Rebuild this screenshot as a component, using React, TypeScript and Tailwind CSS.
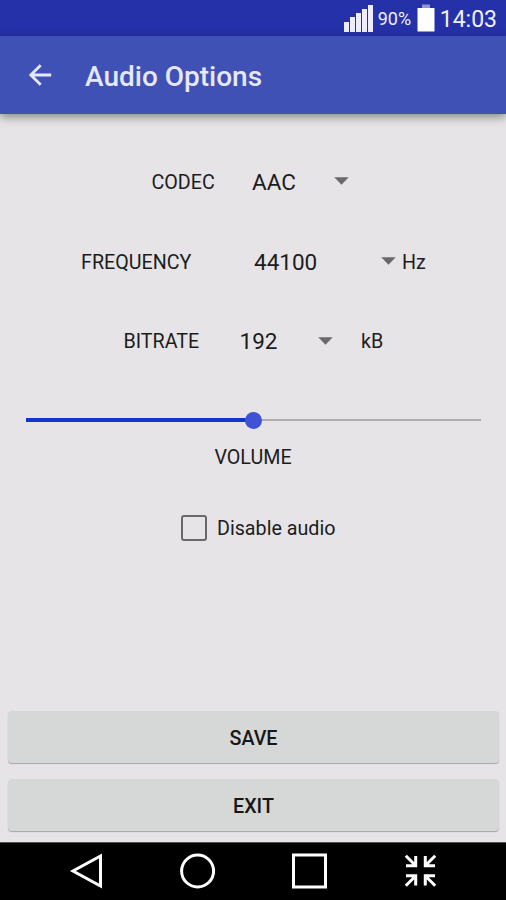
import React, { useState } from 'react';

const SIGNAL_BARS = ['h-[10px]', 'h-[15px]', 'h-[19px]', 'h-[23px]', 'h-[27px]'];

const StatusBar = () => (
  <div className="h-9 shrink-0 bg-[#2431a8] flex items-center justify-end pr-[9px] text-[#f1f1fc]">
    <div className="flex items-end gap-[1.25px] h-[27px] mr-[5px]">
      {SIGNAL_BARS.map(bar => (
        <span key={bar} className={`w-[4.8px] bg-[#eeeefb] ${bar}`} />
      ))}
    </div>
    <span className="text-[18px] leading-none w-[39px] pt-[2px]">90%</span>
    <svg width="18" height="28" viewBox="0 0 18 28" className="mr-[5px]">
      <rect x="5" y="0.5" width="8" height="4" fill="#8f96d4" />
      <rect x="0.5" y="4" width="17" height="23.5" rx="0.5" fill="#ffffff" />
    </svg>
    <span className="text-[23px] leading-none pt-[2px]">14:03</span>
  </div>
);

const Header = () => (
  <header className="relative h-[78px] shrink-0 bg-[#3f51b4] flex items-center pl-7 pt-[2px] text-[#e5e7fb] shadow-[0_3px_9px_rgba(0,0,0,0.42)]">
    <button aria-label="Back" className="w-[57px]">
      <svg width="24" height="24" viewBox="0 0 24 24" fill="none" stroke="currentColor" strokeWidth="2.8">
        <path d="M23.2 11H3M12.7 1.2L2.8 11l9.9 9.8" />
      </svg>
    </button>
    <h1 className="text-[28px] leading-none font-medium pt-[2px]">Audio Options</h1>
  </header>
);

const Caret = () => (
  <svg width="15" height="8" viewBox="0 0 15 8" className="mb-[2px]">
    <path d="M0.3 0.3h14.4L7.5 7.8z" fill="#69686a" />
  </svg>
);

const VolumeSlider = ({ value }: { value: number }) => (
  <div className="relative flex items-center h-[18px] ml-[26px] mr-[25px]">
    <span className="h-1 bg-[#1236cc]" style={{ width: `${value}%` }} />
    <span className="h-[2px] flex-1 bg-[#aeacae]" />
    <span className="absolute size-[17px] -ml-[8.5px] rounded-full bg-[#3f51d5]" style={{ left: `${value}%` }} />
  </div>
);

const NavBar = () => (
  <nav className="h-[58px] shrink-0 bg-black border-t border-[#555555]">
    <svg width="506" height="57" viewBox="0 843 506 57" fill="none" stroke="#ffffff" strokeWidth="3">
      <path d="M100.5 856L73 871l27.5 15z" />
      <circle cx="197.6" cy="871" r="16" />
      <rect x="293.5" y="855" width="32" height="32" />
      {/* four arrows pointing to the centre */}
      <path
        strokeWidth="3"
        d="M405.8 855.8l9 9M406 865.7h9.7v-9.7M435.2 855.8l-9 9M435 865.7h-9.7v-9.7M405.8 885.7l9-9M406 875.8h9.7v9.7M435.2 885.7l-9-9M435 875.8h-9.7v9.7"
      />
    </svg>
  </nav>
);

const BUTTON_CLASS =
  'h-[52px] w-full rounded-[4px] bg-[#d6d8d7] pt-[4px] text-[19.7px] leading-none font-medium text-[#171717] shadow-[0_1px_1px_rgba(0,0,0,0.28)]';

export default function App() {
  const [disabled, setDisabled] = useState(false);

  return (
    <div className="w-[506px] h-[900px] overflow-hidden flex flex-col bg-[#e6e4e7] text-[#1c1c1c] font-[Roboto,sans-serif]">
      <StatusBar />
      <Header />

      <main className="flex-1 flex flex-col pt-7 text-[19.7px] leading-none">
        <div className="h-20 flex items-center pl-[151.5px]">
          <span className="w-[100.5px] pt-[2px]">CODEC</span>
          <span className="w-[82px] text-[22.5px]">AAC</span>
          <Caret />
        </div>
        <div className="h-20 flex items-center pl-[81px]">
          <span className="w-[173px] pt-[2px]">FREQUENCY</span>
          <span className="w-[127px] text-[22.5px]">44100</span>
          <Caret />
          <span className="ml-[6px] pt-[2px]">Hz</span>
        </div>
        <div className="h-[79px] flex items-center pl-[123.5px]">
          <span className="w-[116px] pt-px">BITRATE</span>
          <span className="w-[78.5px] text-[22.5px]">192</span>
          <Caret />
          <span className="ml-[28px] pt-px">kB</span>
        </div>

        <div className="pt-[30px]">
          <VolumeSlider value={50} />
          <div className="mt-[19px] text-center">VOLUME</div>
        </div>

        <label className="mt-[47px] flex items-center pl-[181px]">
          <input type="checkbox" className="sr-only" checked={disabled} onChange={e => setDisabled(e.target.checked)} />
          <span className="size-[26px] rounded-[3px] border-[2.5px] border-[#69686b] mr-[10px]" />
          <span className="pt-[2px]">Disable audio</span>
        </label>

        <div className="mt-auto flex flex-col gap-4 pl-2 pr-[7px] pb-[11px]">
          <button className={BUTTON_CLASS}>SAVE</button>
          <button className={BUTTON_CLASS}>EXIT</button>
        </div>
      </main>

      <NavBar />
    </div>
  );
}
